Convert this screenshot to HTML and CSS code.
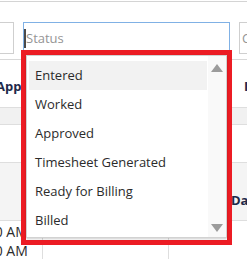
FILE: index.html
```html
<!DOCTYPE html>
<html lang="en">
<head>
  <meta charset="UTF-8">
  <meta name="viewport" content="width=device-width, initial-scale=1.0">
  <title>Status filter</title>
  <link rel="stylesheet" href="styles.css">
</head>
<body>
  <div class="page">
    <div class="topline"></div>

    <div class="filters">
      <div class="field field-left"></div>
      <div class="status-field">
        <div class="field field-focus">
          <span class="caret"></span>
          <span class="placeholder">Status</span>
        </div>

        <!-- open dropdown, outlined in red -->
        <div class="menu">
          <div class="menu-list">
            <div class="options">
              <div class="option active">Entered</div>
              <div class="option">Worked</div>
              <div class="option">Approved</div>
              <div class="option">Timesheet Generated</div>
              <div class="option">Ready for Billing</div>
              <div class="option">Billed</div>
            </div>
            <div class="scrollbar">
              <span class="arrow-up"></span>
              <span class="arrow-down"></span>
            </div>
          </div>
        </div>
      </div>
      <div class="field field-right"><span class="placeholder">Client</span></div>
    </div>

    <div class="table">
      <div class="row head">
        <span class="th first">Approved</span>
        <span class="th last">Invoice</span>
      </div>
      <div class="row band"></div>
      <div class="row blank"></div>
      <div class="row subhead">
        <span class="th last">Date</span>
      </div>
      <div class="row data">
        <span class="cell c1">10:00 AM</span>
        <span class="cell c2">Cdd</span>
        <span class="cell c3">N/a</span>
      </div>
      <div class="row data">
        <span class="cell c1">11:00 AM</span>
        <span class="cell c2"></span>
        <span class="cell c3"></span>
      </div>
    </div>
  </div>
</body>
</html>
```

FILE: styles.css
```css
body {
  margin: 0;
  background: #fff;
  font-family: "Open Sans", Arial, sans-serif;
  font-size: 13px;
  color: #2b2b2b;
  overflow: hidden;
}

.page {
  width: 247px;
  height: 266px;
  overflow: hidden;
}

.topline {
  margin-top: 1px;
  border-top: 1px solid #d4d4d4;
}

.filters {
  display: grid;
  grid-template-columns: 14px 207px 1fr;
  column-gap: 9px;
  margin-top: 20px;
  height: 32px;
}

.field {
  box-sizing: border-box;
  height: 32px;
  border: 1px solid #cfcfcf;
  display: flex;
  align-items: center;
  background: #fff;
}

.field-left {
  border-left: none;
}

.field-right {
  border-right: none;
  padding-left: 2px;
}

.status-field {
  position: relative;
}

.field-focus {
  border-color: #80b1e5;
}

.caret {
  width: 2px;
  height: 19px;
  background: #4a4a4a;
}

.placeholder {
  color: #959595;
}

/* dropdown */
.menu {
  position: absolute;
  top: 28px;
  left: -2px;
  z-index: 2;
  box-sizing: border-box;
  width: 211px;
  height: 195px;
  border: 5px solid #ec1c24;
}

.menu-list {
  box-sizing: border-box;
  display: flex;
  height: 183px;
  background: #fff;
  border: 1px solid #d2d2d2;
  box-shadow: 0 1px 2px rgba(0, 0, 0, 0.2);
}

.options {
  width: 181px;
  box-sizing: border-box;
  padding: 5px 1px 0 2px;
}

.option {
  height: 29px;
  line-height: 29px;
  padding-left: 6px;
  white-space: nowrap;
}

.option.active {
  background: #f2f2f2;
}

.scrollbar {
  width: 18px;
  background: #f9f9f9;
  display: flex;
  flex-direction: column;
  justify-content: space-between;
  align-items: center;
  padding: 8px 0 5px;
  box-sizing: border-box;
}

.arrow-up,
.arrow-down {
  width: 0;
  height: 0;
  border-left: 6.5px solid transparent;
  border-right: 6.5px solid transparent;
}

.arrow-up {
  border-bottom: 8px solid #9c9c9c;
}

.arrow-down {
  border-top: 8px solid #9c9c9c;
}

/* table behind */
.table {
  margin-top: 5px;
  border-top: 1px solid #d8d8d8;
}

.row {
  position: relative;
  display: flex;
  border-bottom: 1px solid #dedede;
}

.head {
  height: 48px;
  align-items: flex-end;
  padding-bottom: 12px;
  box-sizing: border-box;
}

.th {
  font-weight: bold;
  color: #1e2a4a;
  white-space: nowrap;
}

.th.first {
  margin-left: -4px;
}

.th.last {
  margin-left: auto;
  width: 16px;
  overflow: hidden;
}

.head .th.last {
  width: 3px;
}

.band {
  height: 16px;
  background: #f1f1f1;
}

.blank {
  height: 37px;
}

.subhead {
  height: 58px;
  background: #f4f4f4;
  align-items: flex-end;
  padding-bottom: 11px;
  box-sizing: border-box;
}

.data {
  height: 19px;
  border-bottom: none;
  font-size: 14px;
  line-height: 21px;
}

.cell {
  box-sizing: border-box;
  white-space: nowrap;
  overflow: hidden;
  border-right: 1px solid #dedede;
}

.c1 {
  width: 43px;
  text-indent: -33px;
}

.c2 {
  width: 126px;
  padding-left: 14px;
}

.c3 {
  flex: 1;
  padding-left: 12px;
  border-right: none;
}
```
